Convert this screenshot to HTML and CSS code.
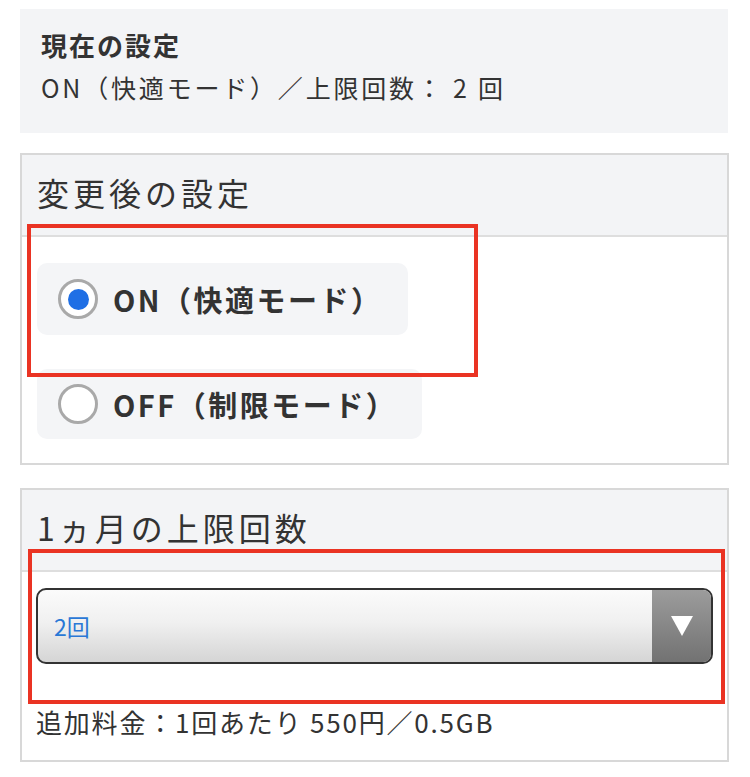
FILE: index.html
```html
<!DOCTYPE html>
<html lang="ja">
<head>
<meta charset="utf-8">
<link rel="stylesheet" href="styles.css">
</head>
<body>
<div class="page">
  <section class="current">
    <div class="current-title">現在の設定</div>
    <div class="current-value">ON（快適モード）／上限回数： 2 回</div>
  </section>

  <section class="panel panel-mode">
    <div class="panel-head">変更後の設定</div>
    <div class="panel-body">
      <label class="opt opt-on">
        <span class="radio checked"><span class="dot"></span></span>
        <span class="opt-label">ON（快適モード）</span>
      </label>
      <label class="opt opt-off">
        <span class="radio"></span>
        <span class="opt-label">OFF（制限モード）</span>
      </label>
    </div>
  </section>

  <section class="panel panel-limit">
    <div class="panel-head">1ヵ月の上限回数</div>
    <div class="panel-body body-limit">
      <div class="select">
        <span class="select-value">2回</span>
        <span class="select-btn"><svg width="24" height="22" viewBox="0 0 24 22"><polygon points="1,1 23,1 12,21" fill="#fff"/></svg></span>
      </div>
      <div class="fee">追加料金：1回あたり 550円／0.5GB</div>
    </div>
  </section>

  <div class="mark mark-1"></div>
  <div class="mark mark-2"></div>
</div>
</body>
</html>
```

FILE: styles.css
```css
* { box-sizing: border-box; }
html, body { margin: 0; padding: 0; background: #fff; }
body {
  font-family: "Noto Sans CJK JP", "Noto Sans", sans-serif;
  color: #333;
  width: 750px;
  height: 777px;
  overflow: hidden;
}
.page {
  position: relative;
  padding: 9px 21px 0 20px;
}
.current {
  background: #f3f4f6;
  height: 124px;
  padding: 19px 21px 0;
  margin-right: 1px;
}
.current-title {
  font-size: 26px;
  font-weight: 700;
  line-height: 34px;
  letter-spacing: 2px;
}
.current-value {
  font-size: 25px;
  line-height: 34px;
  margin-top: 8px;
  letter-spacing: 2.8px;
}
.panel {
  border: 2px solid #d8d8d8;
  margin-top: 20px;
}
.panel-limit { margin-top: 23px; }
.panel-head {
  background: #f3f4f6;
  border-bottom: 2px solid #dedede;
  height: 82px;
  padding: 15px 15px 0;
  font-size: 32px;
  line-height: 44px;
  letter-spacing: 4px;
}
.panel-body {
  padding: 26px 15px 24px;
  display: flex;
  flex-direction: column;
  align-items: flex-start;
  gap: 34px;
}
.opt {
  display: inline-flex;
  align-items: center;
  background: #f4f5f7;
  border-radius: 10px;
  height: 72px;
  padding: 0 25px 0 21px;
  gap: 15px;
}
.opt-off { height: 70px; }
.radio {
  width: 40px;
  height: 40px;
  border-radius: 50%;
  border: 3px solid #a9a9a9;
  background: #fff;
  display: flex;
  align-items: center;
  justify-content: center;
  flex: none;
}
.dot {
  width: 21px;
  height: 21px;
  border-radius: 50%;
  background: #1f6fe5;
}
.opt-label {
  font-size: 29px;
  font-weight: 700;
  letter-spacing: 2.5px;
  line-height: 40px;
}
.body-limit {
  padding: 16px 14px 0;
  gap: 0;
  align-items: stretch;
}
.select {
  height: 76px;
  border: 2px solid #333;
  border-radius: 10px;
  background: linear-gradient(#fbfbfb, #f0f0f0 45%, #d5d5d5);
  display: flex;
  align-items: center;
  overflow: hidden;
}
.select-value {
  flex: 1;
  padding-left: 16px;
  font-size: 23px;
  color: #2a78d6;
}
.select-btn {
  width: 59px;
  align-self: stretch;
  background: linear-gradient(#9c9c9c, #727272);
  display: flex;
  align-items: center;
  justify-content: center;
}
.fee {
  font-size: 26px;
  line-height: 36px;
  margin-top: 40px;
  letter-spacing: 1.8px;
  height: 56px;
}
.mark {
  position: absolute;
  border: 4px solid #ea3323;
}
.mark-1 { left: 27px; top: 224px; width: 451px; height: 153px; }
.mark-2 { left: 28px; top: 549px; width: 697px; height: 155px; }
```
